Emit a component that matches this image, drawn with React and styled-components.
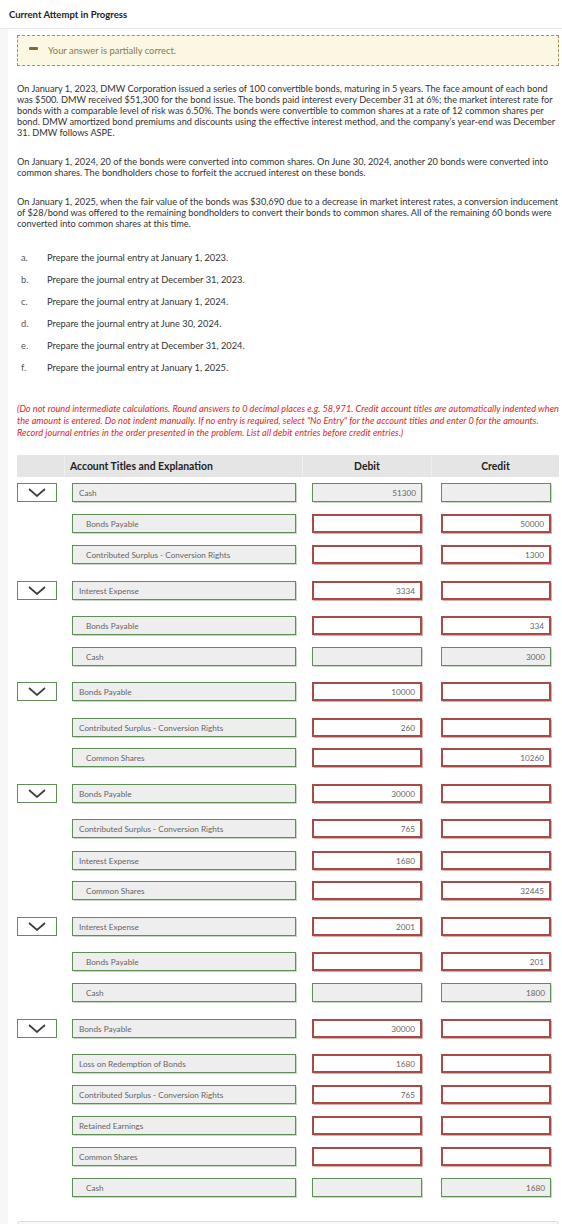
import React from "react";
import styled, { createGlobalStyle } from "styled-components";

const GlobalStyle = createGlobalStyle`
  body {
    margin: 0;
    background: #ffffff;
    font-family: Lato, "Open Sans", Arial, sans-serif;
    color: #333;
  }
`;

// Top bar
const TopBar = styled.div`
  height: 28px;
  display: flex;
  align-items: center;
  padding-left: 9px;
  border-bottom: 1px solid #e8e8e8;
  font-size: 9.5px;
  font-weight: 700;
  color: #222;
`;

const Shell = styled.div`
  display: flex;
`;

const Gutter = styled.div`
  width: 8px;
  flex-shrink: 0;
  background: #f7f7f7;
`;

const Content = styled.div`
  flex: 1;
  padding: 0 3px 0 9px;
  min-width: 0;
`;

// Feedback banner
const Feedback = styled.div`
  margin-top: 6px;
  height: 29px;
  display: flex;
  align-items: center;
  gap: 10px;
  padding-left: 11px;
  border: 1px dashed #a8925c;
  background: #fbf7e3;
  font-size: 9.4px;
  color: #8a7a4e;
`;

const Minus = styled.span`
  width: 9px;
  height: 3px;
  border-radius: 1px;
  background: #7f6b38;
  margin-top: -5px;
`;

const Para = styled.p`
  margin: ${(p) => p.$top}px 0 0;
  font-size: 9.2px;
  line-height: 11px;
  color: #333;
`;

const Steps = styled.ol`
  list-style: none;
  margin: 17px 0 0;
  padding: 0;
`;

const Step = styled.li`
  display: flex;
  height: 22px;
  align-items: center;
  font-size: 9.3px;
  color: #333;
`;

const StepLetter = styled.span`
  width: 30px;
  padding-left: 4px;
  box-sizing: border-box;
  color: #555;
`;

const Instructions = styled.p`
  margin: 25px 0 0;
  font-size: 9.2px;
  line-height: 12px;
  font-style: italic;
  color: #e5241d;
`;

// Journal table
const cols = "47px 238px 129px 128px";

const HeadRow = styled.div`
  display: grid;
  grid-template-columns: ${cols};
  height: 22px;
  margin-top: 16px;
  background: #e5e5e5;
`;

const HeadCell = styled.div`
  display: flex;
  align-items: center;
  justify-content: ${(p) => (p.$center ? "center" : "flex-start")};
  padding-left: ${(p) => (p.$center ? 0 : 5)}px;
  border-left: ${(p) => (p.$first ? "none" : "1px solid #efefef")};
  font-size: 10.4px;
  font-weight: 700;
  color: #222;
`;

const Row = styled.div`
  display: grid;
  grid-template-columns: ${cols};
  height: 19px;
  margin-top: ${(p) => p.$gap}px;
`;

const Cell = styled.div`
  padding-left: ${(p) => p.$pad}px;
`;

const Toggle = styled.div`
  width: 40px;
  height: 19px;
  box-sizing: border-box;
  border: 1px solid #5f8f55;
  background: #fff;
  display: flex;
  align-items: center;
  justify-content: center;
`;

const Field = styled.div`
  width: ${(p) => p.$w}px;
  height: 19px;
  box-sizing: border-box;
  display: flex;
  align-items: center;
  justify-content: ${(p) => (p.$right ? "flex-end" : "flex-start")};
  padding: 0 ${(p) => (p.$right ? 5 : 0)}px 0 ${(p) => p.$indent}px;
  font-size: 8.2px;
  color: #666;
  white-space: nowrap;
  background: ${(p) => (p.$bad ? "#ffffff" : "#eeeeee")};
  border: ${(p) => (p.$bad ? "2px solid #a84a46" : "1px solid #5f8f55")};
  box-shadow: ${(p) =>
    p.$bad ? "0 0 1px 0.5px rgba(168,74,70,0.45)" : "0 0 1px 0.5px rgba(95,143,85,0.35)"};
`;

const Chevron = () => (
  <svg width="18" height="9" viewBox="0 0 18 9">
    <path d="M1 1 L9 8 L17 1" fill="none" stroke="#3d3d3d" strokeWidth="1.7" />
  </svg>
);

const FooterCard = styled.div`
  margin-top: 24px;
  height: 20px;
  border: 1px solid #dcdcdc;
  border-radius: 3px;
  background: #f7f7f7;
`;

// Data: account, indented?, debit, debitBad, credit, creditBad, gap, first of entry
const rows = [
  ["Cash", false, "51300", false, "", false, 6, true],
  ["Bonds Payable", true, "", true, "50000", true, 12],
  ["Contributed Surplus - Conversion Rights", true, "", true, "1300", true, 12],

  ["Interest Expense", false, "3334", true, "", true, 17, true],
  ["Bonds Payable", true, "", true, "334", true, 16],
  ["Cash", true, "", false, "3000", false, 12],

  ["Bonds Payable", false, "10000", true, "", true, 16, true],
  ["Contributed Surplus - Conversion Rights", false, "260", true, "", true, 17],
  ["Common Shares", true, "", true, "10260", true, 11],

  ["Bonds Payable", false, "30000", true, "", true, 17, true],
  ["Contributed Surplus - Conversion Rights", false, "765", true, "", true, 16],
  ["Interest Expense", false, "1680", true, "", true, 13],
  ["Common Shares", true, "", true, "32445", true, 11],

  ["Interest Expense", false, "2001", true, "", true, 17, true],
  ["Bonds Payable", true, "", true, "201", true, 16],
  ["Cash", true, "", false, "1800", false, 12],

  ["Bonds Payable", false, "30000", true, "", true, 17, true],
  ["Loss on Redemption of Bonds", false, "1680", true, "", true, 16],
  ["Contributed Surplus - Conversion Rights", false, "765", true, "", true, 12],
  ["Retained Earnings", false, "", true, "", true, 12],
  ["Common Shares", false, "", true, "", true, 12],
  ["Cash", true, "", false, "1680", false, 12],
];

const steps = [
  ["a.", "Prepare the journal entry at January 1, 2023."],
  ["b.", "Prepare the journal entry at December 31, 2023."],
  ["c.", "Prepare the journal entry at January 1, 2024."],
  ["d.", "Prepare the journal entry at June 30, 2024."],
  ["e.", "Prepare the journal entry at December 31, 2024."],
  ["f.", "Prepare the journal entry at January 1, 2025."],
];

const App = () => {
  return (
    <>
      <GlobalStyle />
      <TopBar>Current Attempt in Progress</TopBar>
      <Shell>
        <Gutter />
        <Content>
          <Feedback>
            <Minus />
            Your answer is partially correct.
          </Feedback>

          <Para $top={17}>
            On January 1, 2023, DMW Corporation issued a series of 100 convertible bonds, maturing in 5
            years. The face amount of each bond was $500. DMW received $51,300 for the bond issue. The
            bonds paid interest every December 31 at 6%; the market interest rate for bonds with a
            comparable level of risk was 6.50%. The bonds were convertible to common shares at a rate of
            12 common shares per bond. DMW amortized bond premiums and discounts using the effective
            interest method, and the company’s year-end was December 31. DMW follows ASPE.
          </Para>
          <Para $top={18}>
            On January 1, 2024, 20 of the bonds were converted into common shares. On June 30, 2024,
            another 20 bonds were converted into common shares. The bondholders chose to forfeit the
            accrued interest on these bonds.
          </Para>
          <Para $top={18}>
            On January 1, 2025, when the fair value of the bonds was $30,690 due to a decrease in market
            interest rates, a conversion inducement of $28/bond was offered to the remaining bondholders
            to convert their bonds to common shares. All of the remaining 60 bonds were converted into
            common shares at this time.
          </Para>

          <Steps>
            {steps.map(([letter, text]) => (
              <Step key={letter}>
                <StepLetter>{letter}</StepLetter>
                {text}
              </Step>
            ))}
          </Steps>

          <Instructions>
            (Do not round intermediate calculations. Round answers to 0 decimal places e.g. 58,971. Credit
            account titles are automatically indented when the amount is entered. Do not indent manually.
            If no entry is required, select "No Entry" for the account titles and enter 0 for the amounts.
            Record journal entries in the order presented in the problem. List all debit entries before
            credit entries.)
          </Instructions>

          <HeadRow>
            <HeadCell $first />
            <HeadCell>Account Titles and Explanation</HeadCell>
            <HeadCell $center>Debit</HeadCell>
            <HeadCell $center>Credit</HeadCell>
          </HeadRow>

          {rows.map(([account, indented, debit, debitBad, credit, creditBad, gap, first], i) => (
            <Row key={i} $gap={gap}>
              <Cell $pad={0}>
                {first && (
                  <Toggle>
                    <Chevron />
                  </Toggle>
                )}
              </Cell>
              <Cell $pad={8}>
                <Field $w={224} $indent={indented ? 13 : 6}>
                  {account}
                </Field>
              </Cell>
              <Cell $pad={10}>
                <Field $w={110} $right $indent={0} $bad={debitBad}>
                  {debit}
                </Field>
              </Cell>
              <Cell $pad={10}>
                <Field $w={110} $right $indent={0} $bad={creditBad}>
                  {credit}
                </Field>
              </Cell>
            </Row>
          ))}

          <FooterCard />
        </Content>
      </Shell>
    </>
  );
};

export default App;
